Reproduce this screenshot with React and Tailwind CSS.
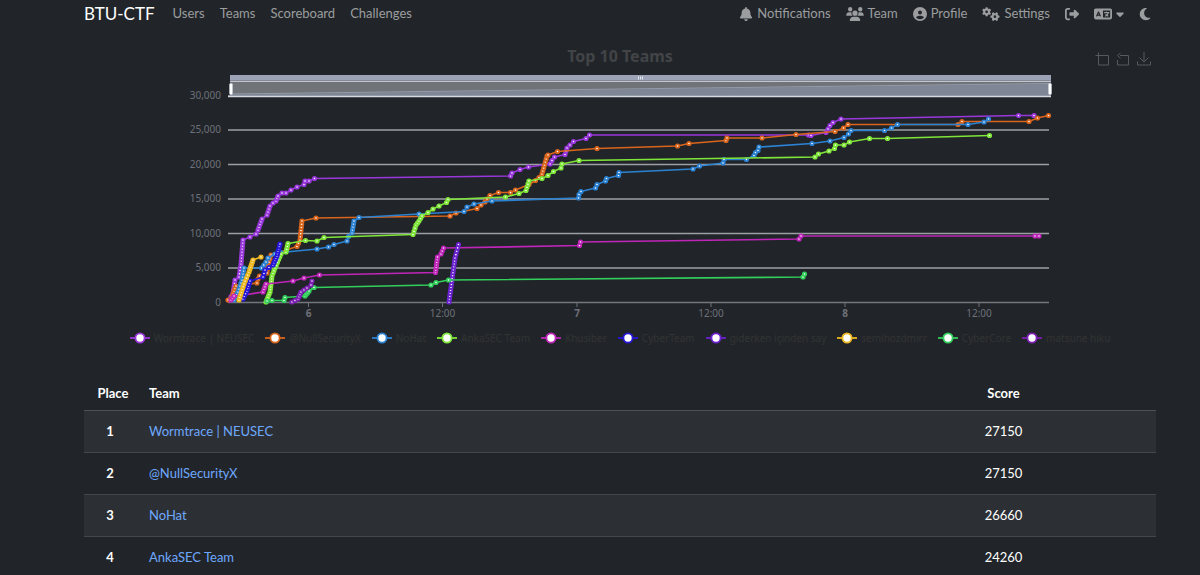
import React from "react";
import {
  FaBell,
  FaUsers,
  FaCircleUser,
  FaGears,
  FaRightFromBracket,
  FaLanguage,
  FaMoon,
  FaCaretDown,
} from "react-icons/fa6";

// Each point is [x, y]; a third number fills the run from the previous point with that many steps.
const series = [
  {
    name: "Wormtrace | NEUSEC",
    color: "#9a37dc",
    points: [[229, 300], [233, 293, 2], [235, 280, 4], [239, 277], [241, 264, 4], [243, 240, 8], [250, 237], [256, 234], [258, 230], [262, 219, 4], [267, 215], [270, 206, 3], [273, 203], [276, 201], [278, 196, 2], [282, 193], [286, 193], [291, 190], [297, 187], [304, 184.5], [305, 181], [309, 181], [314.5, 178.5], [510.5, 176], [512, 173], [520, 169.5], [528.5, 167], [550, 164], [552, 160.5], [554.5, 157], [565, 154.5], [567, 148, 2], [570, 145], [573.5, 141.5], [586, 138.5], [589.5, 135], [808.5, 135], [811, 135.5], [826, 132.5], [828, 129], [830, 125.5], [833, 122.5], [841, 119], [1018.5, 115.5], [1034, 115.5]],
  },
  {
    name: "@NullSecurityX",
    color: "#d9651c",
    points: [[228, 300], [232, 297], [234, 291, 2], [236, 286, 2], [257, 283], [258, 279], [259.5, 276], [267, 273], [268, 266, 2], [271, 255, 3], [297, 246.5], [300, 240, 2], [302, 221, 6], [316, 218], [450, 216], [456, 213], [477, 208.5], [481, 205], [485, 202], [487, 199], [490, 195.5], [498.5, 192.5], [510.5, 192.5], [515.5, 190], [529, 184.5], [535.5, 180.5], [539, 177.5], [542, 174], [547, 156, 6], [548, 155], [557.5, 151.5], [597, 148.5], [677.5, 146], [689, 143.5], [726, 140.5], [727, 138], [762, 138], [796, 134.5], [835, 131.5], [843.5, 128], [848, 124.5], [958, 124.5], [962, 121.5], [1029, 121.5], [1037.5, 118], [1048.5, 115.5]],
  },
  {
    name: "NoHat",
    color: "#2c82d2",
    points: [[234, 300], [238, 292, 3], [242, 280, 4], [244, 268, 4], [261.5, 268], [266, 262, 2], [268, 258], [275, 254], [281, 252.5], [317, 249], [328.5, 247], [334, 244.5], [347, 241], [348.5, 236.5], [352, 233], [354, 221, 4], [359, 217.5], [419, 214], [464, 211.5], [467, 207], [474, 204], [492, 201], [578.5, 198], [579, 194.5], [581, 191.5], [595.5, 188], [597, 184.5], [605.5, 181], [606.5, 178.5], [618.5, 175.5], [619, 172.5], [693, 169], [699.5, 166], [723, 163], [724, 159.5], [746.5, 159.5], [754, 155.5], [755.5, 152.5], [758, 150.5], [759, 147], [812, 143.5], [830, 141], [844, 137.5], [848.5, 134], [851, 130.5], [884.5, 130.5], [891.5, 128], [897.5, 124.5], [968, 124.5], [984, 122], [988.5, 119]],
  },
  {
    name: "AnkaSEC Team",
    color: "#7fe639",
    points: [[266, 302], [270, 292, 4], [272, 276, 6], [275, 268, 3], [281, 254, 5], [286, 252], [288, 243.5, 3], [305.5, 240.5], [317, 241], [324, 237.5], [413, 234.5], [416, 225, 3], [419, 221, 2], [422, 216, 2], [428, 212.5], [433, 209], [439, 206], [446.5, 202.5], [448, 199.5], [505.5, 197], [519, 193.5], [526, 190.5], [529, 181, 3], [542, 178.5], [548, 175.5], [553.5, 171.5], [561, 168], [562, 164], [579, 160.5], [815, 157], [818.5, 154], [829, 151], [834.5, 148.5], [835.5, 145], [844, 145], [849.5, 142], [869.5, 138.5], [887.5, 138.5], [989.5, 135.5]],
  },
  {
    name: "Khusiber",
    color: "#bf25b9",
    points: [[231, 300], [234, 296, 2], [244, 295], [263, 292], [266, 284, 3], [293, 281], [304, 278], [319.5, 275], [435.5, 272.5], [437.5, 257, 6], [441, 254], [443.5, 248, 2], [579.5, 245.5], [580.5, 242], [799, 239], [801, 236], [1035, 236], [1039, 236]],
  },
  {
    name: "CyberTeam",
    color: "#2616d8",
    points: [[243, 299], [247, 291, 3], [250, 281, 4], [263, 277], [265, 270, 2], [273, 265, 2], [277, 256, 4], [280, 244, 5]],
  },
  {
    name: "giderken içinden say",
    color: "#6a22cf",
    points: [[449, 302], [455, 258, 15], [458.5, 244.5, 4]],
  },
  {
    name: "semihozdmirr",
    color: "#edb81f",
    points: [[239, 300], [244, 284, 6], [249, 272, 4], [253, 260, 5], [261, 257]],
  },
  {
    name: "CyberCore",
    color: "#33cf5c",
    points: [[267, 301], [272, 300.5], [284, 300.5], [285, 297.5], [305, 296], [309, 291, 3], [314, 287.5], [431, 285], [436, 282.5], [448.5, 280], [803, 277], [804.5, 274]],
  },
  {
    name: "matsune hiku",
    color: "#7d20b4",
    points: [[292, 302], [298, 299, 2], [301, 292, 3], [307, 288, 2], [311, 285], [312, 281]],
  },
];

function expand(points) {
  const out = [];
  points.forEach(([x, y, steps = 1], i) => {
    const [px, py] = i ? points[i - 1] : [x, y];
    for (let s = 1; s <= steps; s++) {
      out.push([px + ((x - px) * s) / steps, py + ((y - py) * s) / steps]);
    }
  });
  return out;
}

const yTicks = [
  ["30,000", 96],
  ["25,000", 130],
  ["20,000", 164.5],
  ["15,000", 199],
  ["10,000", 233.5],
  ["5,000", 268],
  ["0", 302.5],
];

const xTicks = [
  ["6", 308.5, true],
  ["12:00", 442.5, false],
  ["7", 577, true],
  ["12:00", 711, false],
  ["8", 845, true],
  ["12:00", 979, false],
];

function Chart() {
  return (
    <svg
      viewBox="84 72 1072 252"
      className="block h-auto w-full font-['Noto_Sans',sans-serif] text-[10px]"
      role="img"
      aria-label="Score over time of the top 10 teams"
    >
      {yTicks.map(([label, y]) => (
        <g key={label}>
          <line x1="228" x2="1049" y1={y} y2={y} stroke={y > 300 ? "#74777d" : "#9c9fa4"} strokeWidth="1.4" />
          <text x="221" y={y + 3} textAnchor="end" fill="#6e7079">
            {label}
          </text>
        </g>
      ))}
      {xTicks.map(([label, x, bold]) => (
        <g key={x}>
          <line x1={x} x2={x} y1="303" y2="307" stroke="#6e7079" />
          <text x={x} y="317" textAnchor="middle" fill="#6e7079" fontWeight={bold ? 700 : 400}>
            {label}
          </text>
        </g>
      ))}

      <rect x="230" y="75" width="821" height="6" fill="#9ca3b6" />
      <rect x="230" y="80.500" width="821" height="16" fill="#707377" />
      <path d="M230 94.500L1051 84V96H230Z" fill="#7f8695" />
      <path d="M230 94L1051 83.500" stroke="#949bab" />
      <path d="M230 81.500H1051" stroke="#c0c5d0" />
      <path d="M228 96.500H1051" stroke="#d4d9e4" strokeWidth="1.500" />
      <path d="M638.500 76.500v3M640.500 76.500v3M642.500 76.500v3" stroke="#e6e9f0" />
      <rect x="229.500" y="83.500" width="3" height="11" rx="1" fill="#fff" stroke="#c5cbd8" strokeWidth=".5" />
      <rect x="1048.500" y="83.500" width="3" height="11" rx="1" fill="#fff" stroke="#c5cbd8" strokeWidth=".5" />

      {series.map((s) => {
        const pts = expand(s.points);
        return (
          <g key={s.name} stroke={s.color}>
            <polyline points={pts.map((p) => p.join(",")).join(" ")} fill="none" strokeWidth="1.700" strokeLinejoin="bevel" />
            {pts.map(([x, y], i) => (
              <circle key={i} cx={x} cy={y} r="1.700" fill="#fff" strokeWidth="1.800" />
            ))}
          </g>
        );
      })}
    </svg>
  );
}

function Legend() {
  return (
    <div className="flex h-7 items-center justify-center gap-[11px]">
      {series.map((s) => (
        <button key={s.name} type="button" className="flex shrink-0 items-center gap-1 font-['Noto_Sans',sans-serif] text-[10px] leading-4 text-[#333333]">
          <svg width="20" height="12" viewBox="0 0 20 12" aria-hidden="true">
            <path d="M0 6H20" stroke={s.color} strokeWidth="1.800" />
            <circle cx="10" cy="6" r="4.600" fill="#fff" stroke={s.color} strokeWidth="1.800" />
          </svg>
          {s.name}
        </button>
      ))}
    </div>
  );
}

function Tool({ label, children }) {
  return (
    <button type="button" aria-label={label}>
      <svg width="14" height="14" viewBox="0 0 14 14" fill="none" stroke="#56595d" strokeWidth="1" aria-hidden="true">
        {children}
      </svg>
    </button>
  );
}

const teams = [
  ["Wormtrace | NEUSEC", 27150],
  ["@NullSecurityX", 27150],
  ["NoHat", 26660],
  ["AnkaSEC Team", 24260],
];

export default function App() {
  return (
    <div className="min-h-screen bg-[#212529] pr-11 pl-[84px] font-[Lato,sans-serif] text-[13px] text-white">
      <nav className="flex h-7 items-center justify-between text-[#9b9d9f]">
        <div className="flex items-center">
          <a href="#home" className="mr-[18px] text-[17px] leading-6 text-white">BTU-CTF</a>
          <div className="flex items-center gap-[15px]">
            <a href="#users">Users</a>
            <a href="#teams">Teams</a>
            <a href="#scoreboard">Scoreboard</a>
            <a href="#challenges">Challenges</a>
          </div>
        </div>
        <div className="flex items-center gap-[15px] pr-[5px]">
          <a href="#notifications" className="flex items-center gap-1"><FaBell className="h-[14px] w-[14px]" />Notifications</a>
          <a href="#team" className="flex items-center gap-1"><FaUsers className="h-[14px] w-[18px]" />Team</a>
          <a href="#profile" className="flex items-center gap-1"><FaCircleUser className="h-[14px] w-[14px]" />Profile</a>
          <a href="#settings" className="flex items-center gap-1"><FaGears className="h-[14px] w-[18px]" />Settings</a>
          <a href="#logout" aria-label="Log out"><FaRightFromBracket className="h-[14px] w-[14px]" /></a>
          <button type="button" aria-label="Language" className="flex items-center gap-1">
            <FaLanguage className="h-[18px] w-[18px]" />
            <FaCaretDown className="h-[12px] w-[8px]" />
          </button>
          <button type="button" aria-label="Dark theme"><FaMoon className="h-[14px] w-[12px]" /></button>
        </div>
      </nav>

      <section className="pt-3">
        <div className="grid h-8 grid-cols-[1fr_auto_1fr] items-center">
          <h2 className="col-start-2 font-['Noto_Sans',sans-serif] text-base font-bold text-[#424447]">Top 10 Teams</h2>
          <div className="flex justify-end gap-[7px] pt-1.5 pr-[5px]">
            <Tool label="Zoom">
              <path d="M3.500 0.500V13H13.500V3.500H0.500" />
            </Tool>
            <Tool label="Zoom reset">
              <path d="M4 3.500H12.500V13H1.500V8M4.500 1L1.500 3.500L4.500 6.500" />
            </Tool>
            <Tool label="Save as image">
              <path d="M7 0V9.500M2.500 5.500L7 10L11.500 5.500M.5 9.500V13H13.500V9.500" />
            </Tool>
          </div>
        </div>
        <Chart />
        <Legend />
      </section>

      <table className="mt-6 w-full table-fixed border-collapse">
        <colgroup>
          <col className="w-[52px]" />
          <col />
          <col className="w-[305px]" />
        </colgroup>
        <thead>
          <tr className="h-[34px] border-b border-[#4d5154]">
            <th scope="col" className="pt-0.5 pl-1.5">Place</th>
            <th scope="col" className="pt-0.5 pl-[13px] text-left">Team</th>
            <th scope="col" className="pt-0.5">Score</th>
          </tr>
        </thead>
        <tbody>
          {teams.map(([name, score], i) => (
            <tr key={name} className="h-[42px] border-b border-[#43474b] odd:bg-[#2c3034]">
              <th scope="row" className="pt-0.5">{i + 1}</th>
              <td className="pt-0.5 pl-[13px]">
                <a href="#team" className="text-[#6ea8fe]">{name}</a>
              </td>
              <td className="pt-0.5 text-center">{score}</td>
            </tr>
          ))}
        </tbody>
      </table>
    </div>
  );
}
